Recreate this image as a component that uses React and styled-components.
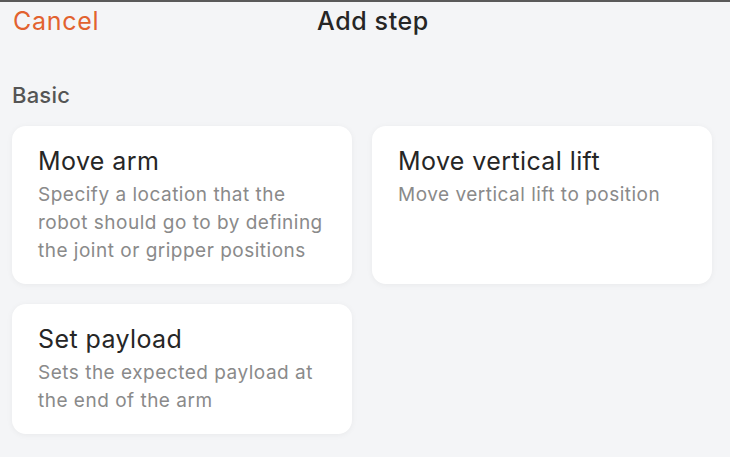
import React from "react";
import styled, { createGlobalStyle } from "styled-components";

const GlobalStyle = createGlobalStyle`
  html, body {
    margin: 0;
    padding: 0;
    background: #f4f5f7;
  }
  body {
    font-family: "Inter", "Noto Sans", sans-serif;
    -webkit-font-smoothing: antialiased;
  }
`;

const steps = [
  {
    title: "Move arm",
    desc: "Specify a location that the robot should go to by defining the joint or gripper positions",
  },
  {
    title: "Move vertical lift",
    desc: "Move vertical lift to position",
  },
  {
    title: "Set payload",
    desc: "Sets the expected payload at the end of the arm",
  },
];

const App = () => {
  return (
    <>
      <GlobalStyle />
      <Page>
        <Header>
          <CancelButton>Cancel</CancelButton>
          <Title>Add step</Title>
          <span />
        </Header>
        <SectionLabel>Basic</SectionLabel>
        <CardGrid>
          {steps.map((s) => (
            <StepCard key={s.title}>
              <StepTitle>{s.title}</StepTitle>
              <StepDesc>{s.desc}</StepDesc>
            </StepCard>
          ))}
        </CardGrid>
      </Page>
    </>
  );
};

export default App;

export const Page = styled.div`
  width: 730px;
  height: 457px;
  box-sizing: border-box;
  border-top: 2px solid #5a5a5a;
  padding: 3px 18px 0 12px;
  overflow: hidden;
`;

export const Header = styled.div`
  display: grid;
  grid-template-columns: 1fr auto 1fr;
  align-items: center;
  height: 32px;
`;

export const CancelButton = styled.button`
  justify-self: start;
  background: none;
  border: none;
  padding: 0 0 0 1px;
  font-family: inherit;
  font-size: 25px;
  line-height: 32px;
  letter-spacing: 0.7px;
  color: #e2622f;
  cursor: pointer;
`;

export const Title = styled.h1`
  margin: 0 0 0 22px;
  font-size: 25px;
  line-height: 32px;
  font-weight: 500;
  letter-spacing: 0.6px;
  color: #262626;
`;

export const SectionLabel = styled.h2`
  margin: 44px 0 17px;
  font-size: 22px;
  line-height: 28px;
  font-weight: 500;
  letter-spacing: 0.2px;
  color: #555;
`;

export const CardGrid = styled.div`
  display: grid;
  grid-template-columns: 340px 340px;
  gap: 20px;
`;

export const StepCard = styled.div`
  background: #fff;
  border-radius: 14px;
  padding: 19px 20px 19px 26px;
  box-shadow: 0 1px 6px rgba(0, 0, 0, 0.05);
  cursor: pointer;
`;

export const StepTitle = styled.div`
  font-size: 25px;
  line-height: 32px;
  font-weight: 400;
  letter-spacing: 0.4px;
  color: #262626;
  margin-bottom: 4px;
`;

export const StepDesc = styled.div`
  font-size: 19px;
  line-height: 28px;
  letter-spacing: 0.5px;
  color: #8a8a8a;
`;
